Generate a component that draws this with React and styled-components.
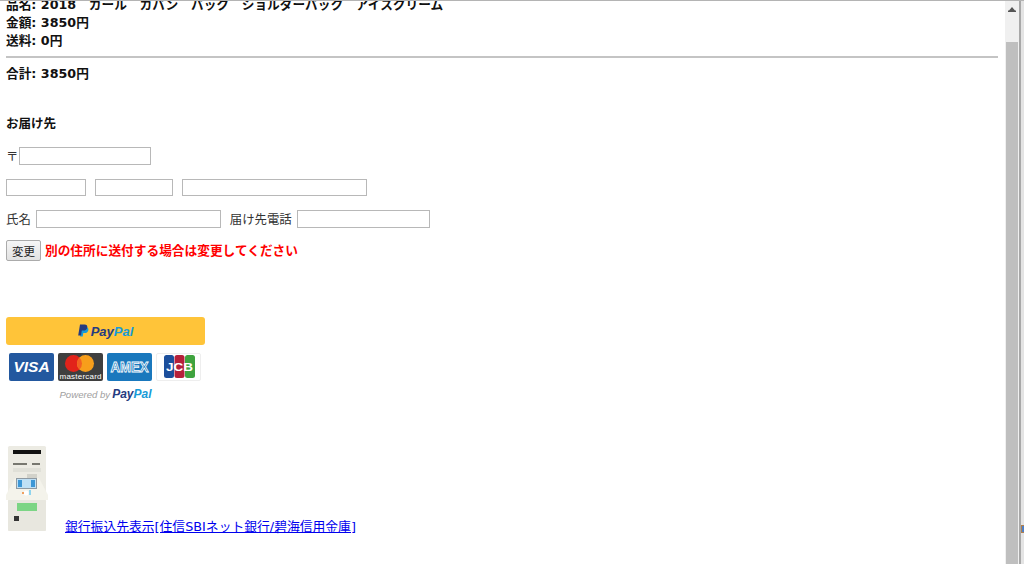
import React from 'react';
import styled, { createGlobalStyle } from 'styled-components';

const Global = createGlobalStyle`
  html, body { margin: 0; padding: 0; overflow: hidden; background: #fff; }
  body { font-family: "DejaVu Sans", "Noto Sans CJK JP", sans-serif; font-size: 12.5px; color: #111; }
`;

const Screen = styled.div`
  width: 1024px;
  height: 564px;
  display: flex;
  overflow: hidden;
  border-top: 1px solid #b4b4b4;
  box-sizing: border-box;
`;

const Page = styled.main`
  flex: 1;
  min-width: 0;
  padding: 0 7px 0 6px;
  overflow: hidden;
`;

const Order = styled.div`
  margin-top: -5px;
  font-weight: bold;
  font-size: 12.7px;
  line-height: 18px;
`;

const Rule = styled.hr`
  margin: 6px 0 7px;
  border: 0;
  border-top: 2px solid #c4c4c4;
`;

const Heading = styled.div`
  margin-top: 32px;
  font-weight: bold;
  font-size: 12.5px;
  line-height: 18px;
`;

const Row = styled.div`
  display: flex;
  align-items: center;
  gap: ${p => p.$gap || 9}px;
  margin-top: ${p => p.$top || 14}px;
  font-size: 12.4px;
  color: #333;
`;

const Label = styled.span`
  margin-left: ${p => p.$lead || 0}px;
`;

const Field = styled.input`
  box-sizing: border-box;
  width: ${p => p.$w}px;
  height: ${p => p.$h || 18}px;
  padding: 0;
  background: #fff;
  border: 1px solid #b8b8b8;
  border-radius: 0;
`;

const Change = styled.button`
  box-sizing: border-box;
  width: 35px;
  height: 21px;
  padding: 0;
  font: 11.5px "DejaVu Sans", "Noto Sans CJK JP", sans-serif;
  color: #222;
  background: linear-gradient(#f6f6f6, #e2e2e2);
  border: 1px solid #ababab;
  border-radius: 2px;
`;

const Notice = styled.span`
  margin-top: -2px;
  color: #ff0000;
  font-weight: bold;
  font-size: 12.7px;
`;

const PayBox = styled.div`
  width: 199px;
  margin-top: 56px;
  display: flex;
  flex-direction: column;
  align-items: center;
`;

const PayButton = styled.div`
  width: 100%;
  height: 28px;
  background: #ffc439;
  border-radius: 3px;
  display: flex;
  align-items: center;
  justify-content: center;
  gap: 2px;
`;

const PayWord = styled.span`
  font: italic bold ${p => p.$size || 13}px "Liberation Sans", sans-serif;
  color: #253b80;
  & > em { color: #179bd7; font-style: inherit; }
`;

const Cards = styled.div`
  display: flex;
  gap: 4px;
  margin-top: 8px;
  width: 100%;
  padding-left: 3px;
  box-sizing: border-box;
`;

const Card = styled.div`
  box-sizing: border-box;
  width: 45px;
  height: 28px;
  border-radius: 2px;
  background: ${p => p.$bg};
  border: ${p => (p.$outlined ? '1px solid #eeeeee' : '0')};
  color: #fff;
  display: flex;
  align-items: center;
  justify-content: center;
  overflow: hidden;
  font-family: "Liberation Sans", sans-serif;
  font-weight: bold;
`;

const VisaWord = styled.span`
  font-style: italic;
  font-size: 15.5px;
`;

const PoweredRow = styled.div`
  display: flex;
  align-items: baseline;
  gap: 2px;
  margin-top: 6px;
  font: italic 9.6px "Liberation Sans", sans-serif;
  color: #a0a0a0;
`;

const BankRow = styled.div`
  display: flex;
  align-items: flex-end;
  gap: 17px;
  margin-top: 45px;
`;

const BankLink = styled.a`
  font-size: 12.8px;
  line-height: 15px;
  color: #0000ee;
  text-decoration: underline;
  margin-bottom: -3px;
`;

const Bar = styled.aside`
  width: 14px;
  flex: none;
  display: flex;
  flex-direction: column;
  background: #f0f0f0;
  padding: 0 1px;
  box-sizing: border-box;
`;

const Arrow = styled.div`
  height: 41px;
  display: flex;
  justify-content: center;
  padding-top: 6px;
  box-sizing: border-box;
`;

const Thumb = styled.div`
  flex: 1;
  background: #bfbfbf;
`;

const Edge = styled.div`
  width: 5px;
  flex: none;
  padding-top: 524px;
  background: #e4e4e4;
  border-left: 2px solid #a8a8a8;
  box-sizing: border-box;
`;

const EdgeIcon = styled.div`
  width: 3px;
  height: 8px;
  box-sizing: border-box;
  background: #4f7fc4;
  border: 1px solid #b08050;
  border-right: 0;
`;

const PpMark = () => (
  <svg width="11" height="14" viewBox="0 0 11 14">
    <path fill="#179bd7" d="M3.5 3h4.2c1.8 0 3 1 2.7 2.9-.3 2-1.7 3.1-3.6 3.1H5.3l-.6 3.6H2.2z" />
    <path fill="#253b80" d="M2 .5h4.6c2 0 3 1 2.7 2.9-.3 2-1.8 3.2-3.8 3.2H3.8L3 11.4H.2z" />
  </svg>
);

const Atm = () => (
  <svg width="42" height="85" viewBox="0 0 42 85">
    <rect x="2" y="0" width="38" height="85" rx="1.5" fill="#ecebe3" />
    <rect x="7" y="4" width="28" height="4" fill="#111" />
    <rect x="7" y="17" width="14" height="2" fill="#77776f" />
    <rect x="26" y="17" width="8" height="2" fill="#77776f" />
    <rect x="7" y="22" width="28" height="4" fill="#e0e0d8" />
    <rect x="21" y="28" width="10" height="5" fill="#d2d2ca" />
    <path d="M9 32h24l9 17v5H0v-5z" fill="#f4f3eb" />
    <rect x="10" y="32" width="21" height="11" fill="#8e9aa3" />
    <rect x="11" y="33" width="19" height="9" fill="#bfe0f5" />
    <rect x="12" y="34" width="4" height="7" fill="#3d97d6" />
    <rect x="25" y="34" width="4" height="7" fill="#3d97d6" />
    <circle cx="20" cy="47" r="2.5" fill="#fff" />
    <rect x="16" y="46" width="2" height="2" fill="#f0a060" />
    <rect x="23" y="44" width="2" height="5" fill="#8fd4ee" />
    <rect x="2" y="54" width="38" height="31" rx="1.5" fill="#e8e7df" />
    <rect x="11" y="57" width="20" height="8" fill="#7cd585" />
    <rect x="8" y="70" width="5" height="5" fill="#333" />
  </svg>
);

export default function App() {
  return (
    <>
      <Global />
      <Screen>
        <Page>
          <Order>
            <div>品名: 2018　カール　カバン　バック　ショルダーバック　アイスクリーム</div>
            <div>金額: 3850円</div>
            <div>送料: 0円</div>
            <Rule />
            <div>合計: 3850円</div>
          </Order>
          <Heading>お届け先</Heading>
          <Row $gap={1} $top={14}>〒<Field $w={132} /></Row>
          <Row><Field $w={80} $h={17} /><Field $w={78} $h={17} /><Field $w={185} $h={17} /></Row>
          <Row $gap={5}>氏名<Field $w={185} /><Label $lead={4}>届け先電話</Label><Field $w={133} /></Row>
          <Row $gap={4} $top={12}><Change>変更</Change><Notice>別の住所に送付する場合は変更してください</Notice></Row>
          <PayBox>
            <PayButton><PpMark /><PayWord>Pay<em>Pal</em></PayWord></PayButton>
            <Cards>
              <Card $bg="#23589f"><VisaWord>VISA</VisaWord></Card>
              <Card $bg="#3f3f3f">
                <svg width="45" height="28" viewBox="0 0 45 28">
                  <circle cx="15.5" cy="10.5" r="8.5" fill="#e2231a" />
                  <circle cx="27.5" cy="10.5" r="8.5" fill="#f79e1b" />
                  <path d="M21.5 4.5a8.500 8.500 0 0 1 0 12 8.500 8.500 0 0 1 0-12z" fill="#f26122" />
                  <text x="1.5" y="25.5" textLength="42" fontSize="8" fontWeight="normal" fill="#fff" fontFamily="Liberation Sans">mastercard</text>
                </svg>
              </Card>
              <Card $bg="#1a78bd">
                <svg width="45" height="28" viewBox="0 0 45 28">
                  <text x="3.5" y="19" textLength="38" lengthAdjust="spacingAndGlyphs" fontSize="14" fontWeight="bold" fill="#1a78bd" stroke="#fff" strokeWidth="0.8" fontFamily="Liberation Sans">AMEX</text>
                </svg>
              </Card>
              <Card $bg="#fff" $outlined>
                <svg width="43" height="26" viewBox="0 0 43 26">
                  <rect x="7" y="1" width="10" height="23" rx="2.5" fill="#1c4f9c" />
                  <rect x="17.5" y="1" width="10" height="23" rx="2.5" fill="#b5203a" />
                  <rect x="28" y="1" width="10" height="23" rx="2.5" fill="#3fa33f" />
                  <text x="9" y="17" textLength="27" lengthAdjust="spacingAndGlyphs" fontSize="10" fontWeight="bold" fill="#fff" fontFamily="Liberation Sans">JCB</text>
                </svg>
              </Card>
            </Cards>
            <PoweredRow>Powered by <PayWord $size={12}>Pay<em>Pal</em></PayWord></PoweredRow>
          </PayBox>
          <BankRow>
            <Atm />
            <BankLink href="#">銀行振込先表示[住信SBIネット銀行/碧海信用金庫]</BankLink>
          </BankRow>
        </Page>
        <Bar>
          <Arrow>
            <svg width="8" height="5" viewBox="0 0 8 5"><path d="M4 0l3 3.500h1V5H0V3.500h1z" fill="#555" /></svg>
          </Arrow>
          <Thumb />
        </Bar>
        <Edge><EdgeIcon /></Edge>
      </Screen>
    </>
  );
}
